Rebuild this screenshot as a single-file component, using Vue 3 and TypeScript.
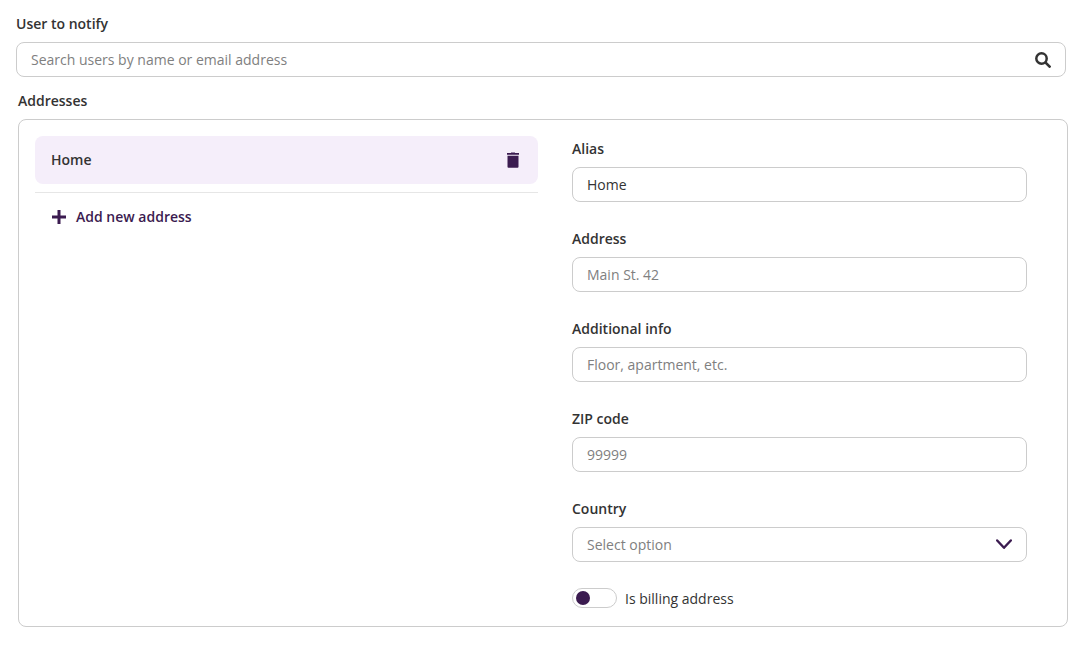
<script setup lang="ts">
import { reactive, ref } from 'vue'

interface Field {
  key: 'alias' | 'address' | 'info' | 'zip'
  label: string
  placeholder: string
}

const fields: Field[] = [
  { key: 'alias', label: 'Alias', placeholder: '' },
  { key: 'address', label: 'Address', placeholder: 'Main St. 42' },
  { key: 'info', label: 'Additional info', placeholder: 'Floor, apartment, etc.' },
  { key: 'zip', label: 'ZIP code', placeholder: '99999' },
]

const query = ref('')
const form = reactive({ alias: 'Home', address: '', info: '', zip: '', country: '', billing: false })
</script>

<template>
  <form class="page" @submit.prevent>
    <div class="field user-field">
      <label class="label" for="user">User to notify</label>
      <div class="control">
        <input id="user" v-model="query" class="input with-icon" type="text" placeholder="Search users by name or email address" />
        <svg class="control-icon search-icon" viewBox="0 0 16 16" aria-hidden="true">
          <circle cx="6.500" cy="6.500" r="5.200" fill="none" stroke="currentColor" stroke-width="2.500" />
          <path d="M10.600 10.600 14.600 14.600" fill="none" stroke="currentColor" stroke-width="2.700" stroke-linecap="round" />
        </svg>
      </div>
    </div>

    <section class="addresses" aria-labelledby="addresses-title">
      <h2 id="addresses-title" class="label">Addresses</h2>
      <div class="panel">
        <div class="list">
          <div class="item">
            <span>{{ form.alias }}</span>
            <button class="delete" type="button" aria-label="Delete address">
              <svg width="16" height="16" viewBox="0 0 16 16" aria-hidden="true">
                <path d="M6 .4h4V1h4v1.700H2V1h4zM2.500 3.800h11v11q0 .9-.9.9H3.400q-.9 0-.9-.9z" fill="currentColor" />
              </svg>
            </button>
          </div>
          <div class="add-row">
            <button class="add" type="button">
              <svg width="16" height="16" viewBox="0 0 16 16" aria-hidden="true">
                <path d="M8 1v14M1 8h14" fill="none" stroke="currentColor" stroke-width="3" />
              </svg>
              Add new address
            </button>
          </div>
        </div>

        <div class="details">
          <div v-for="f in fields" :key="f.key" class="field">
            <label class="label" :for="f.key">{{ f.label }}</label>
            <input :id="f.key" v-model="form[f.key]" class="input" type="text" :placeholder="f.placeholder" />
          </div>
          <div class="field">
            <label class="label" for="country">Country</label>
            <div class="control">
              <select id="country" v-model="form.country" class="input with-icon select">
                <option value="">Select option</option>
              </select>
              <svg class="control-icon chevron" viewBox="0 0 16 16" aria-hidden="true">
                <path d="M1.200 4.500 8 11.800 14.800 4.500" fill="none" stroke="currentColor" stroke-width="2.400" stroke-linecap="round" stroke-linejoin="round" />
              </svg>
            </div>
          </div>
          <label class="toggle">
            <input v-model="form.billing" class="switch" type="checkbox" role="switch" />
            Is billing address
          </label>
        </div>
      </div>
    </section>
  </form>
</template>

<style>
body {
  background: #fff;
}
</style>

<style scoped>
.page,
.page * {
  box-sizing: border-box;
}

.page {
  padding: 14px 0 18px;
  font: 400 14px/20px "Open Sans", "Noto Sans", sans-serif;
  color: #333;
}

.user-field {
  padding: 0 20px 0 16px;
}

.addresses {
  padding: 14px 18px 0;
}

.field,
.addresses {
  display: flex;
  flex-direction: column;
  gap: 8px;
}

.label {
  margin: 0;
  font-size: 14px;
  font-weight: 600;
  line-height: 20px;
}

.control {
  position: relative;
  display: flex;
}

.input {
  width: 100%;
  height: 35px;
  margin: 0;
  padding: 0 14px;
  border: 1px solid #ccc;
  border-radius: 8px;
  background: #fff;
  font: inherit;
  color: #333;
  appearance: none;
}

.input::placeholder {
  color: #808080;
  opacity: 1;
}

.with-icon {
  padding-right: 40px;
}

.select {
  color: #808080;
}

.control-icon {
  position: absolute;
  top: 10px;
  right: 15px;
  width: 16px;
  height: 16px;
  pointer-events: none;
}

.chevron {
  top: 9px;
  color: #3b1b50;
}

.panel {
  display: grid;
  grid-template-columns: 503fr 455fr;
  gap: 34px;
  padding: 16px 40px 16px 16px;
  border: 1px solid #ccc;
  border-radius: 8px;
}

.item {
  display: flex;
  align-items: center;
  justify-content: space-between;
  height: 48px;
  padding: 0 16px;
  border-radius: 8px;
  background: #f5eefa;
  font-weight: 600;
}

.delete,
.add {
  display: flex;
  align-items: center;
  border: 0;
  padding: 0;
  background: none;
  font: inherit;
  font-weight: 600;
  color: #3b1b50;
  cursor: pointer;
}

.delete {
  padding: 0 1px;
}

.add-row {
  margin-top: 8px;
  padding: 14px 16px;
  border-top: 1px solid #e6e6e6;
}

.add {
  gap: 9px;
}

.details {
  display: flex;
  flex-direction: column;
  gap: 27px;
  padding-top: 3px;
}

.toggle {
  display: flex;
  align-items: flex-start;
  gap: 8px;
  margin-top: -1px;
  line-height: 22px;
}

.switch {
  display: flex;
  align-items: center;
  width: 45px;
  height: 20px;
  margin: 0;
  padding: 0 3px;
  border: 1px solid #ccc;
  border-radius: 10px;
  background: #fff;
  appearance: none;
}

.switch::before {
  content: "";
  width: 14px;
  height: 14px;
  border-radius: 50%;
  background: #3b1b50;
}

.switch:checked {
  justify-content: flex-end;
}
</style>
